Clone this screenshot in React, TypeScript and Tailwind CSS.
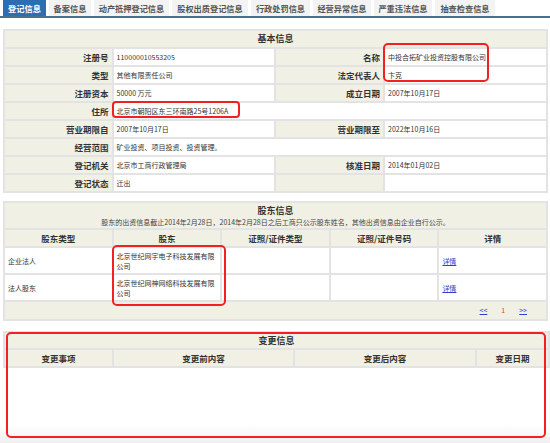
import React from 'react';

const cjk = "font-['Noto_Sans_CJK_SC','Noto_Sans_CJK_JP',sans-serif]";

const tabs = [
  { name: '登记信息', width: 'w-[43px]', active: true },
  { name: '备案信息', width: 'w-[42px]' },
  { name: '动产抵押登记信息', width: 'w-[75px]' },
  { name: '股权出质登记信息', width: 'w-[76px]' },
  { name: '行政处罚信息', width: 'w-[59px]' },
  { name: '经营异常信息', width: 'w-[58px]' },
  { name: '严重违法信息', width: 'w-[58px]' },
  { name: '抽查检查信息', width: 'w-[60px]' },
];

const label = 'bg-[#f1f0e4] border-2 border-[#e3e3e3] text-right pr-[3px] font-bold text-[8.5px] leading-[12px] text-[#333]';
const value = 'bg-white border-2 border-[#e3e3e3] pl-[3px] text-[7px] leading-[10px] text-[#333] text-left';
const head = 'bg-[#f1f0e4] border-2 border-[#e3e3e3] text-center font-bold text-[8.5px] leading-[12px] text-[#333]';

const shareholders = [
  { type: '企业法人', name: '北京世纪网宇电子科技发展有限公司' },
  { type: '法人股东', name: '北京世纪网神网络科技发展有限公司' },
];

export default function App() {
  return (
    <div className={`relative w-[550px] h-[443px] overflow-hidden bg-white ${cjk}`}>
      {/* tabs */}
      <div className="flex gap-[3px] pl-[3px] h-[18px] border-b-2 border-[#4b6f92]">
        {tabs.map((t) => (
          <div
            key={t.name}
            className={`${t.width} h-[16px] text-center text-[8.2px] leading-[16px] font-bold ${
              t.active ? 'bg-[#2c6db3] text-white' : 'bg-[#f3f3f3] text-[#555]'
            }`}
          >
            {t.name}
          </div>
        ))}
      </div>

      {/* 基本信息 */}
      <table className="ml-[3px] mt-[11px] w-[545px] table-fixed border-collapse">
        <colgroup>
          <col className="w-[20%]" />
          <col className="w-[30%]" />
          <col className="w-[20%]" />
          <col className="w-[30%]" />
        </colgroup>
        <tbody>
          <tr className="h-[18px]">
            <td colSpan={4} className={`${head} text-[9px]`}>基本信息</td>
          </tr>
          <tr className="h-[18px]">
            <td className={label}>注册号</td>
            <td className={value}>110000010553205</td>
            <td className={label}>名称</td>
            <td className={value}>中投合拓矿业投资控股有限公司</td>
          </tr>
          <tr className="h-[18px]">
            <td className={label}>类型</td>
            <td className={value}>其他有限责任公司</td>
            <td className={label}>法定代表人</td>
            <td className={value}>卞克</td>
          </tr>
          <tr className="h-[18px]">
            <td className={label}>注册资本</td>
            <td className={value}>50000 万元</td>
            <td className={label}>成立日期</td>
            <td className={value}>2007年10月17日</td>
          </tr>
          <tr className="h-[18px]">
            <td className={label}>住所</td>
            <td colSpan={3} className={value}>北京市朝阳区东三环南路25号1206A</td>
          </tr>
          <tr className="h-[18px]">
            <td className={label}>营业期限自</td>
            <td className={value}>2007年10月17日</td>
            <td className={label}>营业期限至</td>
            <td className={value}>2022年10月16日</td>
          </tr>
          <tr className="h-[18px]">
            <td className={label}>经营范围</td>
            <td colSpan={3} className={value}>矿业投资、项目投资、投资管理。</td>
          </tr>
          <tr className="h-[18px]">
            <td className={label}>登记机关</td>
            <td className={value}>北京市工商行政管理局</td>
            <td className={label}>核准日期</td>
            <td className={value}>2014年01月02日</td>
          </tr>
          <tr className="h-[18px]">
            <td className={label}>登记状态</td>
            <td className={value}>迁出</td>
            <td className={label}></td>
            <td className={value}></td>
          </tr>
        </tbody>
      </table>

      {/* 股东信息 */}
      <table className="ml-[3px] mt-[8px] w-[545px] table-fixed border-collapse">
        <tbody>
          <tr className="h-[27px]">
            <td colSpan={5} className={head}>
              <div className="text-[9px] leading-[12px]">股东信息</div>
              <div className="text-[7px] leading-[10px] font-normal text-[#444]">
                股东的出资信息截止2014年2月28日，2014年2月28日之后工商只公示股东姓名，其他出资信息由企业自行公示。
              </div>
            </td>
          </tr>
          <tr className="h-[18px]">
            <td className={head}>股东类型</td>
            <td className={head}>股东</td>
            <td className={head}>证照/证件类型</td>
            <td className={head}>证照/证件号码</td>
            <td className={head}>详情</td>
          </tr>
          {shareholders.map((s) => (
            <tr key={s.name} className="h-[27px]">
              <td className={value}>{s.type}</td>
              <td className={`${value} pr-[3px]`}>{s.name}</td>
              <td className={value}></td>
              <td className={value}></td>
              <td className={value}>
                <a className="text-[#3a3acb] underline">详情</a>
              </td>
            </tr>
          ))}
          <tr className="h-[19px]">
            <td colSpan={5} className="bg-[#f1f0e4] border-2 border-[#e3e3e3] text-right pr-[19px] text-[7px]">
              <span className="text-[#3a3acb] underline">&lt;&lt;</span>
              <span className="text-[#e33] ml-[14px] mr-[14px]">1</span>
              <span className="text-[#3a3acb] underline">&gt;&gt;</span>
            </td>
          </tr>
        </tbody>
      </table>

      {/* 变更信息 */}
      <table className="ml-[3px] mt-[10px] w-[545px] table-fixed border-collapse">
        <colgroup>
          <col className="w-[109px]" />
          <col className="w-[181px]" />
          <col className="w-[182px]" />
          <col className="w-[73px]" />
        </colgroup>
        <tbody>
          <tr className="h-[17px]">
            <td colSpan={4} className={`${head} text-[9px]`}>变更信息</td>
          </tr>
          <tr className="h-[18px]">
            <td className={head}>变更事项</td>
            <td className={head}>变更前内容</td>
            <td className={head}>变更后内容</td>
            <td className={head}>变更日期</td>
          </tr>
          <tr className="h-[80px]">
            <td colSpan={4} className="bg-white"></td>
          </tr>
        </tbody>
      </table>

      {/* bottom fade */}
      <div className="absolute left-0 right-0 bottom-0 h-[18px] bg-gradient-to-b from-white to-[#efefef]" />

      {/* red highlight marks */}
      <div className="absolute left-[383px] top-[43px] w-[106px] h-[39px] border-2 border-[#f22020] rounded-[5px]" />
      <div className="absolute left-[112px] top-[101px] w-[128px] h-[17px] border-2 border-[#f22020] rounded-[4px]" />
      <div className="absolute left-[112px] top-[245px] w-[114px] h-[61px] border-2 border-[#f22020] rounded-[5px]" />
      <div className="absolute left-[6px] top-[332px] w-[540px] h-[106px] border-2 border-[#f22020] rounded-[5px]" />
    </div>
  );
}
